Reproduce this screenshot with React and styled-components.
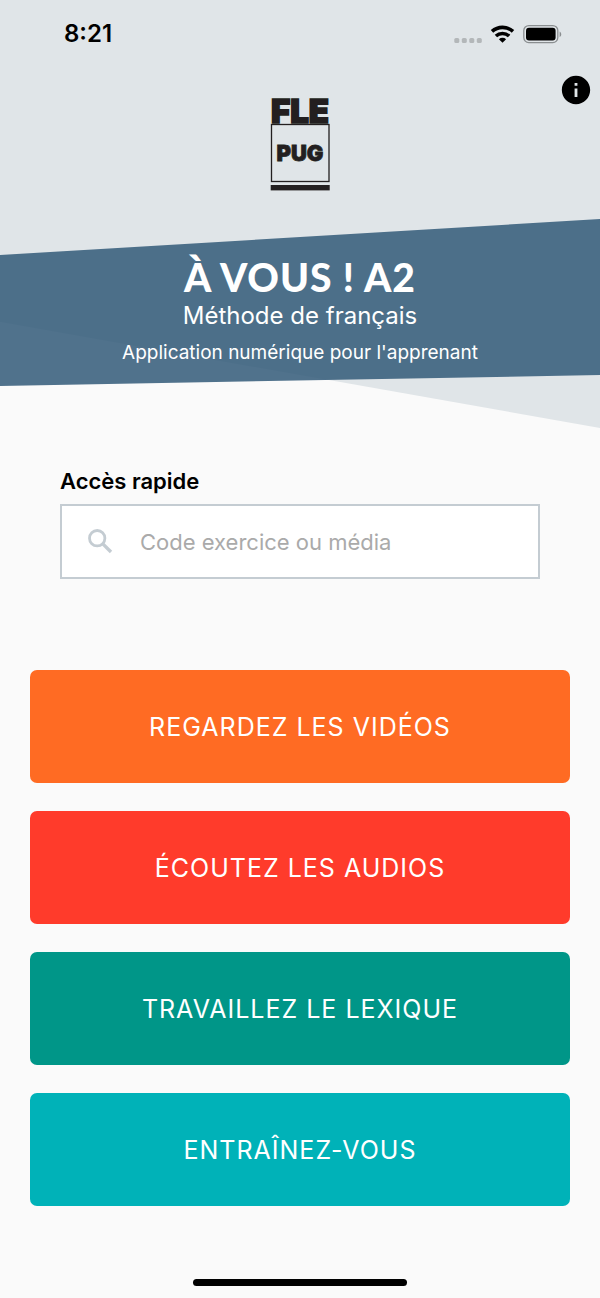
import React from "react";
import styled, { createGlobalStyle } from "styled-components";
import { MdInfo } from "react-icons/md";

const GlobalStyle = createGlobalStyle`
  * {
    box-sizing: border-box;
  }

  body {
    margin: 0;
    background-color: #fafafa;
    color: #000;
    font-family: Inter, "Liberation Sans", sans-serif;
  }
`;

const Page = styled.div`
  display: flex;
  flex-direction: column;
  min-height: 100vh;
`;

const Hero = styled.header`
  display: grid;
`;

const Backdrop = styled.div`
  grid-area: 1 / 1;
  background-color: #e0e5e8;
  clip-path: polygon(0 0, 100% 0, 100% 100%, 0 75.2%);
`;

const HeroContent = styled.div`
  grid-area: 1 / 1;
  z-index: 1;
  padding-bottom: 42px;
`;

const StatusBar = styled.div`
  display: flex;
  justify-content: space-between;
  align-items: center;
  height: 68px;
  padding: 0 38px 0 64px;
`;

const Time = styled.span`
  font-size: 24px;
  font-weight: 600;
  line-height: 32px;
`;

const TopBar = styled.div`
  display: grid;
  grid-template-columns: 1fr auto 1fr;
  align-items: start;
  height: 151px;
  padding: 5px 7px 0;
`;

const LogoLink = styled.a`
  grid-column: 2;
  display: block;
  margin-top: 13px;

  svg {
    display: block;
  }
`;

const InfoButton = styled.button`
  justify-self: end;
  display: flex;
  padding: 0;
  border: none;
  background: none;
  color: #000;
  cursor: pointer;
`;

const Band = styled.div`
  height: 167px;
  padding-top: 36px;
  background-color: rgba(51, 91, 121, 0.86);
  clip-path: polygon(0 36px, 100% 0, 100% 156px, 0 100%);
  color: #fff;
  text-align: center;
`;

const Title = styled.h1`
  margin: 0;
  font-family: Lato, "Liberation Sans", sans-serif;
  font-size: 39px;
  font-weight: 900;
  line-height: 44px;
  letter-spacing: 1px;
`;

const Subtitle = styled.p`
  margin: 0;
  font-size: 24px;
  line-height: 34px;
`;

const Tagline = styled.p`
  margin: 0;
  font-size: 19px;
  line-height: 40px;
`;

const SearchForm = styled.form`
  margin: 40px 60px 0;
`;

const SearchLabel = styled.label`
  display: block;
  font-size: 22px;
  font-weight: 600;
  line-height: 26px;
`;

const SearchBox = styled.div`
  display: flex;
  align-items: center;
  gap: 22px;
  height: 75px;
  margin-top: 10px;
  padding: 0 22px;
  border: 2px solid #c4ccd2;
  background-color: #fff;
  color: #c4ccd2;

  svg {
    flex: none;
  }
`;

const SearchInput = styled.input`
  flex: 1;
  min-width: 0;
  padding: 0;
  border: none;
  outline: none;
  background: none;
  color: #000;
  font-family: inherit;
  font-size: 22px;

  &::placeholder {
    color: #aaa;
    opacity: 1;
  }
`;

const Menu = styled.nav`
  display: flex;
  flex-direction: column;
  gap: 28px;
  margin: 91px 30px 0;
`;

const MenuButton = styled.button`
  height: 113px;
  border: none;
  border-radius: 7px;
  background-color: ${({ $color }) => $color};
  color: #fff;
  font-family: inherit;
  font-size: 25px;
  text-transform: uppercase;
  letter-spacing: 1px;
  cursor: pointer;
`;

const HomeIndicator = styled.div`
  align-self: center;
  width: 214px;
  height: 7px;
  margin-top: auto;
  margin-bottom: 12px;
  border-radius: 4px;
  background-color: #000;
`;

const StatusIcons = () => (
  <svg width="108" height="20" viewBox="0 0 108 20" aria-hidden="true">
    <g fill="#b3b7b9">
      <rect x="0.3" y="14" width="5" height="5" rx="1.6" />
      <rect x="7.8" y="14" width="5" height="5" rx="1.6" />
      <rect x="15.3" y="14" width="5" height="5" rx="1.6" />
      <rect x="22.8" y="14" width="5" height="5" rx="1.6" />
    </g>
    <g fill="none" stroke="#000" strokeWidth="3.6">
      <path d="M38 7.4a15.6 15.6 0 0 1 21 0" />
      <path d="M41.9 12a9.8 9.8 0 0 1 13.2 0" />
    </g>
    <path d="M48.5 18.8l-3.6-3.6a5.2 5.2 0 0 1 7.2 0z" fill="#000" />
    <rect x="69.8" y="1.6" width="34" height="17" rx="5" fill="none" stroke="#8a8e90" strokeWidth="1.3" />
    <rect x="72" y="3.8" width="29.6" height="12.6" rx="3" fill="#000" />
    <path d="M105.6 7.4c2.2 1 2.2 4.6 0 5.6z" fill="#8a8e90" />
  </svg>
);

const SearchIcon = () => (
  <svg width="34" height="34" viewBox="0 0 34 34" fill="none" stroke="currentColor" aria-hidden="true">
    <circle cx="13.2" cy="13.2" r="7.7" strokeWidth="2.8" />
    <path d="M18.6 18.6l8.4 8.4" strokeWidth="3.4" />
  </svg>
);

const Logo = () => (
  <svg width="80" height="110" viewBox="-10 -10 80 110" role="img" aria-label="FLE PUG">
    <g
      fill="#231f20"
      stroke="#231f20"
      fontFamily="Inter, 'Liberation Sans', sans-serif"
      fontWeight="900"
      textAnchor="middle"
    >
      <text x="30" y="27" fontSize="33" strokeWidth="1.6">FLE</text>
      <text x="30" y="65" fontSize="22" strokeWidth="0.8">PUG</text>
    </g>
    <rect x="1.5" y="28.5" width="57.5" height="57" fill="none" stroke="#231f20" strokeWidth="1.3" />
    <rect x="0.7" y="89" width="59" height="5.4" fill="#231f20" />
  </svg>
);

const menuItems = [
  { label: "Regardez les vidéos", color: "#ff6b23" },
  { label: "Écoutez les audios", color: "#ff3b2b" },
  { label: "Travaillez le lexique", color: "#009688" },
  { label: "Entraînez-vous", color: "#00b2b8" },
];

const App = () => {
  return (
    <Page>
      <GlobalStyle />
      <Hero>
        <Backdrop />
        <HeroContent>
          <StatusBar>
            <Time>8:21</Time>
            <StatusIcons />
          </StatusBar>
          <TopBar>
            <LogoLink href="#">
              <Logo />
            </LogoLink>
            <InfoButton type="button" aria-label="Informations">
              <MdInfo size={34} />
            </InfoButton>
          </TopBar>
          <Band>
            <Title>À VOUS ! A2</Title>
            <Subtitle>Méthode de français</Subtitle>
            <Tagline>Application numérique pour l'apprenant</Tagline>
          </Band>
        </HeroContent>
      </Hero>

      <SearchForm>
        <SearchLabel htmlFor="code">Accès rapide</SearchLabel>
        <SearchBox>
          <SearchIcon />
          <SearchInput id="code" type="text" placeholder="Code exercice ou média" />
        </SearchBox>
      </SearchForm>

      <Menu>
        {menuItems.map((item) => (
          <MenuButton key={item.label} type="button" $color={item.color}>
            {item.label}
          </MenuButton>
        ))}
      </Menu>

      <HomeIndicator />
    </Page>
  );
};

export default App;
